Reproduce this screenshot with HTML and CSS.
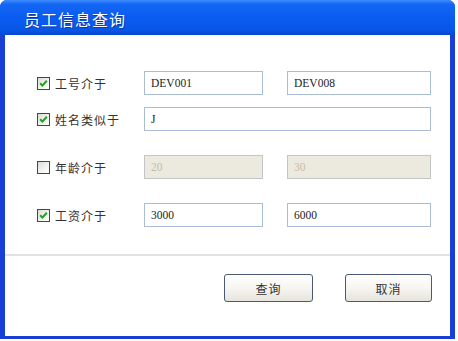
FILE: index.html
```html
<!DOCTYPE html>
<html lang="zh">
<head>
<meta charset="utf-8">
<title>员工信息查询</title>
<link rel="stylesheet" href="styles.css">
</head>
<body>
<div class="window">
  <div class="titlebar"><span class="title">员工信息查询</span></div>
  <div class="client">
    <div class="form">
      <div class="row row1">
        <span class="check on"><svg viewBox="0 0 11 11" width="11" height="11"><path d="M2.2 5.2 L4.4 7.6 L8.8 2.8" fill="none" stroke="#21a121" stroke-width="2"/></svg></span>
        <span class="label">工号介于</span>
        <span class="field short">DEV001</span>
        <span class="field long">DEV008</span>
      </div>
      <div class="row row2">
        <span class="check on"><svg viewBox="0 0 11 11" width="11" height="11"><path d="M2.2 5.2 L4.4 7.6 L8.8 2.8" fill="none" stroke="#21a121" stroke-width="2"/></svg></span>
        <span class="label">姓名类似于</span>
        <span class="field wide">J</span>
      </div>
      <div class="row row3">
        <span class="check"></span>
        <span class="label">年龄介于</span>
        <span class="field short disabled">20</span>
        <span class="field long disabled">30</span>
      </div>
      <div class="row row4">
        <span class="check on"><svg viewBox="0 0 11 11" width="11" height="11"><path d="M2.2 5.2 L4.4 7.6 L8.8 2.8" fill="none" stroke="#21a121" stroke-width="2"/></svg></span>
        <span class="label">工资介于</span>
        <span class="field short">3000</span>
        <span class="field long">6000</span>
      </div>
    </div>
    <div class="sep"></div>
    <div class="buttons">
      <span class="btn btn-query">查询</span>
      <span class="btn btn-cancel">取消</span>
    </div>
  </div>
</div>
</body>
</html>
```

FILE: styles.css
```css
html, body {
  margin: 0;
  padding: 0;
  background: #ffffff;
}
body {
  width: 458px;
  height: 341px;
  overflow: hidden;
  font-family: "Noto Sans CJK SC", "Noto Sans", sans-serif;
}
.window {
  width: 455px;
  height: 339px;
  display: flex;
  flex-direction: column;
  background: #1a3fd6;
  border-radius: 7px 7px 0 0;
  overflow: hidden;
}
.titlebar {
  height: 35px;
  flex: none;
  display: flex;
  align-items: center;
  padding: 2px 0 0 24px;
  box-sizing: border-box;
  background: linear-gradient(#3d8cfb 0%, #1467f4 12%, #0a5cf0 50%, #0856e8 85%, #0647d2 100%);
}
.title {
  color: #ffffff;
  font-size: 16px;
  letter-spacing: 1px;
  text-shadow: 1px 1px 0 #0a3aa8;
}
.client {
  flex: 1;
  margin: 0 5px 3px 5px;
  background: #ffffff;
  display: flex;
  flex-direction: column;
}
.form {
  padding-top: 36px;
  display: flex;
  flex-direction: column;
}
.row {
  height: 24px;
  display: flex;
  align-items: center;
  padding-left: 32px;
}
.row2 { margin-top: 12px; }
.row3 { margin-top: 24px; }
.row4 { margin-top: 24px; }
.check {
  width: 13px;
  height: 13px;
  box-sizing: border-box;
  border: 1px solid #1c5180;
  background: linear-gradient(135deg, #dcdcd7 0%, #f4f4f0 60%, #ffffff 100%);
  display: flex;
  align-items: center;
  justify-content: center;
  flex: none;
}
.check svg { display: block; }
.label {
  width: 89px;
  margin-left: 5px;
  font-size: 12px;
  letter-spacing: 1px;
  color: #333333;
  white-space: nowrap;
}
.field {
  height: 24px;
  box-sizing: border-box;
  border: 1px solid #a9bdd4;
  background: #ffffff;
  font-family: "Liberation Serif", "Times New Roman", serif;
  font-size: 11.5px;
  color: #222222;
  padding-left: 6px;
  display: flex;
  align-items: center;
  flex: none;
}
.short { width: 119px; }
.long { width: 144px; margin-left: 24px; }
.wide { width: 287px; }
.disabled {
  background: #ece9df;
  border-color: #c2c4c8;
  color: #c4bea8;
}
.sep {
  margin-top: 27px;
  height: 2px;
  background: #e2e2e2;
}
.buttons {
  display: flex;
  justify-content: flex-end;
  padding: 18px 18px 0 0;
  gap: 32px;
}
.btn {
  height: 28px;
  box-sizing: border-box;
  border: 1px solid #4a5a74;
  border-radius: 3px;
  background: linear-gradient(#ffffff 0%, #f6f5f1 50%, #e6e4dc 100%);
  display: flex;
  align-items: center;
  justify-content: center;
  font-size: 12px;
  color: #333333;
  letter-spacing: 1px;
}
.btn-query { width: 89px; }
.btn-cancel { width: 87px; }
```
